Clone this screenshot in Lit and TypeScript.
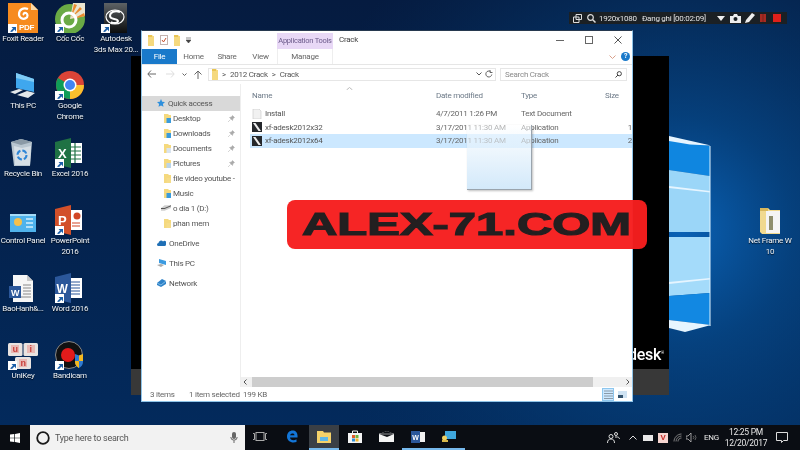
import { LitElement, html, css, svg } from 'lit';
import { customElement } from 'lit/decorators.js';

const shortcut = svg`<g><rect x="0" y="21" width="9" height="9" fill="#fff"/><path d="M2 28.500l3-3-1.500-1.500H8v4.500L6.500 26.500l-2.500 2.500z" fill="#1c5fa8"/></g>`;

const desktopIcons = [
  {
    x: 23, y: 3, lines: ['Foxit Reader'],
    art: svg`<path d="M0 0h23l7 7v23H0z" fill="#f68b1f"/><path d="M23 0v7h7z" fill="#fbd9a8"/>
      <path d="M20 6c-5-2-9 1-9 5 0 4 4 6 7 4 2-1 2-4 0-5-2-.5-3 1-2 2" fill="none" stroke="#fff" stroke-width="2.200"/>
      <text x="11" y="27" font-size="8" font-weight="700" fill="#fff" font-family="Liberation Sans">PDF</text>
      ${shortcut}`,
  },
  {
    x: 70, y: 3, lines: ['Cốc Cốc'],
    art: svg`<circle cx="15" cy="16" r="15" fill="#6aaa45"/><path d="M15 16L18 0h12v13z" fill="#e9e4cf"/>
      <path d="M16 14l3-13 3 1zM17 14l8-10 2 2zM18 16l11-6 1 3z" fill="#ea8a2e"/>
      <circle cx="14" cy="17" r="7" fill="none" stroke="#fff" stroke-width="3"/>
      ${shortcut}`,
  },
  {
    x: 116, y: 3, lines: ['Autodesk', '3ds Max 20...'],
    art: svg`<defs><linearGradient id="ad" x1="0" y1="0" x2="0" y2="1"><stop offset="0" stop-color="#5d6265"/><stop offset="1" stop-color="#0c0d0e"/></linearGradient></defs>
      <rect x="3" y="0" width="23" height="30" fill="url(#ad)"/>
      <path d="M19 9c-5-2-10 0-10 4 0 4 7 2 8 5 0 2-4 3-7 1" fill="none" stroke="#fff" stroke-width="2"/>
      <ellipse cx="14" cy="14" rx="9" ry="7" fill="none" stroke="#fff" stroke-width="1.200"/>
      ${shortcut}`,
  },
  {
    x: 23, y: 70, lines: ['This PC'],
    art: svg`<path d="M8 3l18 6v13L8 18z" fill="#3fa7ee"/><path d="M8 3l18 6v3L8 8z" fill="#7fcbf5"/>
      <path d="M2 22l9-3 4 1-8 4zM9 25l10-4 8 2-7 5z" fill="#e4e8ea"/>`,
  },
  {
    x: 70, y: 70, lines: ['Google', 'Chrome'],
    art: svg`<circle cx="15" cy="15" r="14" fill="#db4437"/>
      <path d="M15 15L3 22A14 14 0 0 1 3 8z" fill="#0f9d58"/><path d="M15 15L3 22A14 14 0 0 0 15 29z" fill="#0f9d58"/>
      <path d="M15 15h14a14 14 0 0 1-14 14z" fill="#fbc02d"/>
      <circle cx="15" cy="15" r="6.500" fill="#fff"/><circle cx="15" cy="15" r="5" fill="#4285f4"/>
      ${shortcut}`,
  },
  {
    x: 23, y: 138, lines: ['Recycle Bin'],
    art: svg`<path d="M3 4l10-3 11 3-2 24H6z" fill="#b9c6d0"/><path d="M3 4l10-3 11 3-11 3z" fill="#8b9aa6"/>
      <path d="M6 8l8 2 9-2-1 19H7z" fill="#d7dfe5"/>
      <circle cx="14" cy="17" r="4.500" fill="none" stroke="#2f86d6" stroke-width="2" stroke-dasharray="5 2"/>`,
  },
  {
    x: 70, y: 138, lines: ['Excel 2016'],
    art: svg`<rect x="14" y="5" width="13" height="20" fill="#fff"/>
      <path d="M15 9h11M15 13h11M15 17h11M15 21h11M20 5v20" stroke="#217346" stroke-width="1.200"/>
      <path d="M0 4l16-4v30L0 26z" fill="#1f7244"/>
      <text x="3" y="20" font-size="13" font-weight="700" fill="#fff" font-family="Liberation Sans">X</text>
      ${shortcut}`,
  },
  {
    x: 23, y: 205, lines: ['Control Panel'],
    art: svg`<rect x="2" y="9" width="26" height="18" fill="#4fb3ec"/><rect x="2" y="9" width="26" height="2" fill="#a6dcf7"/>
      <circle cx="10" cy="17" r="4" fill="#f4c04c"/><path d="M18 14h7M18 18h7M18 22h7" stroke="#d6f0fc" stroke-width="1.500"/>`,
  },
  {
    x: 70, y: 205, lines: ['PowerPoint', '2016'],
    art: svg`<rect x="14" y="5" width="13" height="20" fill="#fff"/>
      <circle cx="22" cy="11" r="3.500" fill="#d24726"/><path d="M17 18h8M17 21h8" stroke="#d24726" stroke-width="1.200"/>
      <path d="M0 4l16-4v30L0 26z" fill="#d2502a"/>
      <text x="3" y="20" font-size="13" font-weight="700" fill="#fff" font-family="Liberation Sans">P</text>
      ${shortcut}`,
  },
  {
    x: 23, y: 273, lines: ['BaoHanh&...'],
    art: svg`<path d="M5 2h14l6 6v21H5z" fill="#f6f6f6"/><path d="M19 2v6h6z" fill="#c8c8c8"/>
      <path d="M15 12h8M15 15h8M15 18h8M15 21h8M8 24h15" stroke="#8a8a8a"/>
      <rect x="1" y="13" width="12" height="12" fill="#2b579a"/>
      <text x="3" y="23" font-size="9" font-weight="700" fill="#fff" font-family="Liberation Sans">W</text>`,
  },
  {
    x: 70, y: 273, lines: ['Word 2016'],
    art: svg`<rect x="14" y="5" width="13" height="20" fill="#fff"/>
      <path d="M16 9h9M16 12h9M16 15h9M16 18h9M16 21h9" stroke="#2b579a" stroke-width="1.200"/>
      <path d="M0 4l16-4v30L0 26z" fill="#2b579a"/>
      <text x="1.500" y="20" font-size="12" font-weight="700" fill="#fff" font-family="Liberation Sans">W</text>
      ${shortcut}`,
  },
  {
    x: 23, y: 340, lines: ['UniKey'],
    art: svg`<rect x="0" y="3" width="14.500" height="13" rx="1.500" fill="#e9e3e0"/><rect x="15.500" y="3" width="14.500" height="13" rx="1.500" fill="#e9e3e0"/><rect x="7" y="17" width="16" height="12" rx="1.500" fill="#e9e3e0"/>
      <rect x="3" y="5" width="8" height="8" fill="#e9b9b4"/><rect x="19" y="5" width="8" height="8" fill="#e9b9b4"/><rect x="11" y="19" width="8" height="8" fill="#e9b9b4"/>
      <text x="4.500" y="12" font-size="9" font-weight="700" fill="#c9413c" font-family="Liberation Sans">u</text>
      <text x="21.500" y="12" font-size="9" font-weight="700" fill="#c9413c" font-family="Liberation Sans">i</text>
      <text x="12.500" y="26" font-size="9" font-weight="700" fill="#c9413c" font-family="Liberation Sans">n</text>
      ${shortcut}`,
  },
  {
    x: 70, y: 340, lines: ['Bandicam'],
    art: svg`<circle cx="14" cy="15" r="13.500" fill="#111" stroke="#888" stroke-width="1"/>
      <circle cx="13" cy="15" r="7" fill="#e21b1b"/>
      <path d="M20 14l4 1.500 4-1.500v8c0 3-2 5-4 6-2-1-4-3-4-6z" fill="#2f7ad1"/><path d="M24 15.500l4-1.500v7h-4zM20 21h4v7c-2-1-4-3-4-6z" fill="#f5b81f"/>
      ${shortcut}`,
  },
  {
    x: 770, y: 205, lines: ['Net Frame W', '10'],
    art: svg`<path d="M5 3h8l2 2h10v24H7L5 27z" fill="#f0d98f"/><path d="M11 6h14v22H11z" fill="#f4f4f4"/>
      <path d="M14 11h4v14h-4z" fill="#8d8d6c"/><path d="M5 3h8v3H5z" fill="#d8b75c"/>`,
  },
];

const navRows = [
  { label: 'Desktop', color: '#3a9bdc', pin: true },
  { label: 'Downloads', color: '#3a9bdc', pin: true },
  { label: 'Documents', color: '#d9e4ef', pin: true },
  { label: 'Pictures', color: '#b9d4ea', pin: true },
  { label: 'file video youtube -', color: '#f5dc8a', pin: false },
  { label: 'Music', color: '#3a9bdc', pin: false },
  { label: 'o dia 1 (D:)', color: '', pin: false },
  { label: 'phan mem', color: '#f5dc8a', pin: false },
];

const fileRows = [
  { name: 'Install', date: '4/7/2011 1:26 PM', type: 'Text Document', size: '', app: false, selected: false },
  { name: 'xf-adesk2012x32', date: '3/17/2011 11:30 AM', type: 'Application', size: '1', app: true, selected: false },
  { name: 'xf-adesk2012x64', date: '3/17/2011 11:30 AM', type: 'Application', size: '2', app: true, selected: true },
];

const folder = svg`<svg width="6" height="11" viewBox="0 0 6 11" style="flex:none"><path d="M0 0h4l1 1h1v10H0z" fill="#f5d97e"/><path d="M0 0h4v2H0z" fill="#e9c453"/></svg>`;

@customElement('app-root')
export class AppRoot extends LitElement {
  static styles = css`
    :host {
      display: block;
      width: 800px;
      height: 450px;
      overflow: hidden;
      font-family: Roboto, 'Noto Sans', sans-serif;
      font-size: 8px;
      letter-spacing: -0.25px;
    }
    .screen {
      display: flex;
      flex-direction: column;
      width: 800px;
      height: 450px;
      filter: blur(0.4px);
    }
    .desktop {
      position: relative;
      flex: 1;
      overflow: hidden;
      background: #04224c;
    }
    .wallpaper {
      position: absolute;
      left: 0;
      top: 0;
    }
    .icon {
      position: absolute;
      width: 60px;
      display: flex;
      flex-direction: column;
      align-items: center;
    }
    .icon svg {
      display: block;
      margin-bottom: 1px;
    }
    .icon-label {
      color: #eef3f8;
      font-size: 8px;
      line-height: 10.500px;
      text-align: center;
      white-space: nowrap;
      text-shadow: 0 1px 1px rgba(0, 0, 0, 0.8);
    }

    .stage {
      position: absolute;
      left: 131px;
      top: 56px;
      width: 538px;
      height: 339px;
      display: flex;
      flex-direction: column;
    }
    .stage-black {
      flex: 1;
      background: #000;
      display: flex;
      align-items: flex-end;
      justify-content: flex-end;
      padding: 0 5px 5px 0;
      color: #fff;
      font-size: 16px;
      font-weight: 500;
      line-height: 18px;
      box-sizing: border-box;
    }
    .stage-black sup {
      font-size: 4px;
      line-height: 4px;
      font-weight: 400;
    }
    .stage-strip {
      height: 26px;
      background: #383838;
    }

    .recorder {
      position: absolute;
      left: 569px;
      top: 12px;
      width: 218px;
      height: 12px;
      background: #1b2024;
      display: flex;
      align-items: center;
      color: #e4e4e4;
      font-size: 8px;
      box-sizing: border-box;
      padding-left: 4px;
    }
    .recorder svg {
      flex: none;
    }
    .rec-size {
      margin-left: 3px;
      width: 43px;
      white-space: nowrap;
    }
    .rec-status {
      width: 70px;
      white-space: nowrap;
    }

    .window {
      position: absolute;
      left: 141px;
      top: 30px;
      width: 492px;
      height: 372px;
      box-sizing: border-box;
      background: #fff;
      border: 1px solid #8fc4e8;
      border-top-color: #27394f;
      display: flex;
      flex-direction: column;
      color: #555;
    }
    .titlebar {
      height: 18px;
      display: flex;
      align-items: flex-end;
      flex: none;
    }
    .qat {
      width: 135px;
      height: 18px;
      display: flex;
      align-items: center;
      padding-left: 6px;
      gap: 6px;
      box-sizing: border-box;
    }
    .app-tools {
      width: 56px;
      height: 16px;
      background: #e8d8f6;
      color: #6b5a8a;
      font-size: 7.500px;
      line-height: 16px;
      text-align: center;
      white-space: nowrap;
    }
    .title {
      margin-left: 6px;
      height: 18px;
      line-height: 18px;
      flex: 1;
      color: #444;
    }
    .win-btn {
      width: 29px;
      height: 18px;
      display: flex;
      align-items: center;
      justify-content: center;
    }
    .tabs {
      height: 15px;
      display: flex;
      align-items: stretch;
      flex: none;
      border-bottom: 1px solid #e6e6e6;
      color: #666;
    }
    .tab {
      display: flex;
      align-items: center;
      justify-content: center;
    }
    .tab-file {
      width: 35px;
      background: #1979ca;
      color: #fff;
    }
    .tab-manage {
      width: 56px;
      border-left: 1px solid #eee;
      border-right: 1px solid #eee;
      box-sizing: border-box;
    }
    .tab-right {
      margin-left: auto;
      display: flex;
      align-items: center;
      gap: 5px;
      padding-right: 2px;
    }
    .help {
      width: 9px;
      height: 9px;
      border-radius: 50%;
      background: #1979ca;
      color: #fff;
      font-size: 7px;
      font-weight: 700;
      line-height: 9px;
      text-align: center;
    }
    .addressbar {
      height: 19px;
      flex: none;
      display: flex;
      align-items: center;
      padding-bottom: 1px;
      box-sizing: border-box;
    }
    .nav-arrows {
      width: 66px;
      display: flex;
      align-items: center;
      padding-left: 5px;
      gap: 7px;
      box-sizing: border-box;
    }
    .address {
      width: 288px;
      height: 13px;
      border: 1px solid #e6e6e6;
      box-sizing: border-box;
      display: flex;
      align-items: center;
      padding-left: 3px;
      gap: 4px;
      color: #555;
      white-space: nowrap;
    }
    .address svg {
      flex: none;
    }
    .address-tools {
      margin-left: auto;
      display: flex;
      align-items: center;
      gap: 3px;
      padding-right: 2px;
    }
    .search {
      width: 127px;
      height: 13px;
      margin-left: 4px;
      border: 1px solid #e6e6e6;
      box-sizing: border-box;
      display: flex;
      align-items: center;
      justify-content: space-between;
      padding: 0 4px;
      color: #8a8a8a;
    }
    .content {
      flex: 1;
      display: flex;
      min-height: 0;
    }
    .nav {
      width: 99px;
      flex: none;
      border-right: 1px solid #eeeeee;
      padding-top: 11.500px;
      box-sizing: border-box;
    }
    .nav-row {
      height: 15px;
      display: flex;
      align-items: center;
      white-space: nowrap;
      color: #555;
      position: relative;
      overflow: hidden;
    }
    .nav-row svg {
      flex: none;
    }
    .nav-row.top {
      padding-left: 15px;
      gap: 3px;
      margin-top: 5px;
    }
    .nav-row.quick {
      background: #d9d9d9;
      margin-top: 0;
    }
    .nav-row.sub {
      padding-left: 22px;
      gap: 2px;
    }
    .nav-row .pin {
      position: absolute;
      right: 5px;
      top: 4px;
    }
    .main {
      flex: 1;
      min-width: 0;
      display: flex;
      flex-direction: column;
      position: relative;
    }
    .list {
      flex: 1;
      padding: 3px 0 0 9px;
      overflow: hidden;
    }
    .list-head {
      height: 20px;
      display: grid;
      grid-template-columns: 184px 85px 84px 1fr;
      color: #6d7a88;
      align-items: end;
      padding-bottom: 5px;
      box-sizing: border-box;
      position: relative;
    }
    .list-head span {
      padding-left: 2px;
      line-height: 12px;
    }
    .caret {
      position: absolute;
      left: 96px;
      top: 0;
    }
    .list-row {
      height: 13.500px;
      display: grid;
      grid-template-columns: 184px 85px 84px 1fr;
      align-items: center;
      color: #666;
      white-space: nowrap;
    }
    .list-row.selected {
      background: #cce8ff;
    }
    .list-name {
      display: flex;
      align-items: center;
      gap: 3px;
      padding-left: 2px;
      color: #555;
    }
    .list-cell {
      padding-left: 2px;
    }
    .list-size {
      text-align: right;
    }
    .ghost {
      position: absolute;
      left: 226px;
      top: 41px;
      width: 64px;
      height: 64px;
      background: linear-gradient(#ffffff80, #d3e9fa);
      border-right: 1px solid #9aa4ad;
      border-bottom: 1px solid #9aa4ad;
      box-shadow: 1px 1px 2px rgba(0, 0, 0, 0.25);
    }
    .hscroll {
      height: 10px;
      flex: none;
      background: #f0f0f0;
      display: flex;
      align-items: center;
      justify-content: space-between;
      padding: 0 2px;
      box-sizing: border-box;
      position: relative;
    }
    .thumb {
      position: absolute;
      left: 11px;
      top: 0;
      bottom: 0;
      width: 341px;
      background: #cdcdcd;
    }
    .status {
      height: 14px;
      flex: none;
      display: flex;
      align-items: center;
      padding-left: 8px;
      color: #666;
      white-space: nowrap;
    }
    .status .items {
      width: 39px;
    }
    .status .sel {
      width: 54px;
    }
    .views {
      margin-left: auto;
      display: flex;
      align-items: center;
      gap: 2px;
      padding-right: 4px;
    }
    .view-btn {
      width: 12px;
      height: 13px;
      display: flex;
      align-items: center;
      justify-content: center;
      box-sizing: border-box;
    }
    .view-btn.on {
      background: #cce8ff;
      border: 1px solid #8ec7ee;
    }

    .banner {
      position: absolute;
      left: 287px;
      top: 200px;
      width: 360px;
      height: 49px;
      border-radius: 8px;
      background: rgba(246, 30, 30, 0.97);
      display: flex;
      align-items: center;
      justify-content: center;
      overflow: hidden;
    }
    .banner-text {
      color: #231f20;
      font-family: 'Liberation Sans', Arial, sans-serif;
      font-size: 32px;
      font-weight: 700;
      letter-spacing: 0;
      line-height: 49px;
      white-space: nowrap;
      transform: scaleX(1.530);
      -webkit-text-stroke: 1.200px #231f20;
    }

    .taskbar {
      height: 25px;
      flex: none;
      display: flex;
      align-items: stretch;
      background: #0a0d13;
      color: #e8e8e8;
    }
    .tb-start {
      width: 30px;
      display: flex;
      align-items: center;
      justify-content: center;
    }
    .tb-search {
      width: 215px;
      background: #f2f2f2;
      display: flex;
      align-items: center;
      padding: 0 7px 0 6px;
      box-sizing: border-box;
      gap: 5px;
      color: #555;
      font-size: 9px;
    }
    .tb-search svg:last-child {
      margin-left: auto;
    }
    .tb-btn {
      display: flex;
      align-items: center;
      justify-content: center;
      box-sizing: border-box;
      border-bottom: 2px solid transparent;
    }
    .tb-btn.open {
      border-bottom-color: #76b9ed;
    }
    .tb-btn.active {
      background: #3a3f45;
      border-bottom-color: #76b9ed;
    }
    .tray {
      margin-left: auto;
      display: flex;
      align-items: center;
      padding-right: 3px;
    }
    .tray-item {
      display: flex;
      align-items: center;
      justify-content: center;
    }
    .eng {
      width: 27px;
      font-size: 8px;
      text-align: center;
    }
    .clock {
      width: 42px;
      font-size: 8.500px;
      line-height: 11px;
      text-align: center;
      white-space: nowrap;
    }
    .v-badge {
      width: 10px;
      height: 10px;
      background: #f6d5d0;
      color: #c9302c;
      font-size: 8px;
      font-weight: 700;
      line-height: 10px;
      text-align: center;
    }
  `;

  private renderWallpaper() {
    return html`<svg class="wallpaper" width="800" height="425" viewBox="0 0 800 425">
      <defs>
        <linearGradient id="bg" x1="0" y1="0" x2="0" y2="1">
          <stop offset="0" stop-color="#051b40"/><stop offset="0.5" stop-color="#04224d"/><stop offset="1" stop-color="#032a5c"/>
        </linearGradient>
        <radialGradient id="glow" gradientUnits="userSpaceOnUse" cx="680" cy="230" r="380">
          <stop offset="0" stop-color="#0a62b6"/><stop offset="0.3" stop-color="#064a8c" stop-opacity="0.75"/><stop offset="1" stop-color="#04305f" stop-opacity="0"/>
        </radialGradient>
      </defs>
      <rect width="800" height="425" fill="url(#bg)"/>
      <rect width="800" height="425" fill="url(#glow)"/>
      <path d="M669 137L710 146V176L669 170Z" fill="#0f86e0"/>
      <path d="M669 170L710 176V232H669Z" fill="#9bd6f8"/>
      <path d="M669 237H710V293L669 296Z" fill="#a4dbfa"/>
      <path d="M669 296L710 293V325L669 320Z" fill="#1288e2"/>
      <path d="M669 136L711 145.500L690 144.500L669 141ZM669 186L710 191V192.500L669 188ZM669 282L710 278V279.500L669 284ZM669 320L711 325L685 332L669 328Z" fill="#e6f5ff"/>
      <path d="M710 146V326" stroke="#dff3ff" stroke-width="1"/>
    </svg>`;
  }

  private renderRecorder() {
    return html`<div class="recorder">
      <svg width="9" height="9" viewBox="0 0 9 9"><path d="M3 .5h5.500v5H3zM.5 3h5.500v5.500H.5z" fill="#1b2024" stroke="#ddd"/></svg>
      <svg style="margin-left:5px" width="9" height="9" viewBox="0 0 9 9"><circle cx="3.500" cy="3.500" r="2.800" fill="none" stroke="#ddd" stroke-width="1.200"/><path d="M5.500 5.500L8.500 8.500" stroke="#ddd" stroke-width="1.500"/></svg>
      <span class="rec-size">1920x1080</span>
      <span class="rec-status">Đang ghi [00:02:09]</span>
      <svg style="margin-left:5px" width="8" height="5" viewBox="0 0 8 5"><path d="M0 0h8L4 5z" fill="#eee"/></svg>
      <svg style="margin-left:5px" width="11" height="9" viewBox="0 0 11 9"><path d="M0 2h3l1-2h3l1 2h3v7H0z" fill="#eee"/><circle cx="5.500" cy="5" r="2" fill="#1b2024"/></svg>
      <svg style="margin-left:4px" width="10" height="10" viewBox="0 0 10 10"><path d="M0 10l1-3 6-7 3 2-6 7z" fill="#eee"/></svg>
      <svg style="margin-left:5px" width="6" height="8" viewBox="0 0 6 8"><rect width="6" height="8" fill="#a82a22"/><rect x="2.700" width=".6" height="8" fill="#5c1e1a"/></svg>
      <svg style="margin-left:7px" width="8" height="8" viewBox="0 0 8 8"><rect width="8" height="8" fill="#e0201a"/></svg>
    </div>`;
  }

  private renderTitlebar() {
    return html`<div class="titlebar">
      <div class="qat">
        ${folder}
        <svg width="8" height="10" viewBox="0 0 8 10"><rect x=".5" y=".5" width="7" height="9" fill="#fff" stroke="#c4b4b0"/><path d="M2 5l1.500 2 2.500-4" fill="none" stroke="#c9502c"/></svg>
        ${folder}
        <svg width="5" height="6" viewBox="0 0 5 6"><path d="M0 1h5M0 3h5L2.500 6z" stroke="#444" stroke-width=".6" fill="#444"/></svg>
      </div>
      <div class="app-tools">Application Tools</div>
      <div class="title">Crack</div>
      <div class="win-btn"><svg width="8" height="8" viewBox="0 0 8 8"><path d="M0 4.500h8" stroke="#666"/></svg></div>
      <div class="win-btn"><svg width="8" height="8" viewBox="0 0 8 8"><rect x=".5" y=".5" width="7" height="7" fill="none" stroke="#666"/></svg></div>
      <div class="win-btn"><svg width="8" height="8" viewBox="0 0 8 8"><path d="M.5 .5l7 7M7.500 .5l-7 7" stroke="#555"/></svg></div>
    </div>`;
  }

  private renderTabs() {
    return html`<div class="tabs">
      <div class="tab tab-file">File</div>
      <div class="tab" style="width:33px">Home</div>
      <div class="tab" style="width:34px">Share</div>
      <div class="tab" style="width:33px">View</div>
      <div class="tab tab-manage">Manage</div>
      <div class="tab-right">
        <svg width="7" height="4" viewBox="0 0 7 4"><path d="M.5 .5l3 3 3-3" fill="none" stroke="#d9a08a"/></svg>
        <div class="help">?</div>
      </div>
    </div>`;
  }

  private renderAddress() {
    return html`<div class="addressbar">
      <div class="nav-arrows">
        <svg width="9" height="8" viewBox="0 0 9 8"><path d="M9 4H1M4 .5L.8 4 4 7.500" fill="none" stroke="#666" stroke-width="1"/></svg>
        <svg style="margin-left:3px" width="9" height="8" viewBox="0 0 9 8"><path d="M0 4h8M5 .5L8.200 4 5 7.500" fill="none" stroke="#ddd" stroke-width="1"/></svg>
        <svg width="5" height="3" viewBox="0 0 5 3"><path d="M.5 .5l2 2 2-2" fill="none" stroke="#666"/></svg>
        <svg width="8" height="9" viewBox="0 0 8 9"><path d="M4 9V1M.5 4.500L4 1l3.500 3.500" fill="none" stroke="#666" stroke-width="1"/></svg>
      </div>
      <div class="address">
        ${folder}
        <span>&gt;</span><span>2012 Crack</span><span>&gt;</span><span>Crack</span>
        <div class="address-tools">
          <svg width="6" height="4" viewBox="0 0 6 4"><path d="M.5 .5L3 3 5.500 .5" fill="none" stroke="#555"/></svg>
          <svg width="8" height="8" viewBox="0 0 8 8"><path d="M6.800 4.500A3 3 0 1 1 5.500 1.500M5 0v2.500h2.500" fill="none" stroke="#666"/></svg>
        </div>
      </div>
      <div class="search">
        <span>Search Crack</span>
        <svg width="7" height="7" viewBox="0 0 7 7"><circle cx="4.300" cy="2.700" r="2.100" fill="none" stroke="#444"/><path d="M3 4L.5 6.500" stroke="#444"/></svg>
      </div>
    </div>`;
  }

  private renderNav() {
    return html`<div class="nav">
      <div class="nav-row top quick">
        <svg width="8" height="8" viewBox="0 0 8 8"><path d="M4 0l1.200 2.700 2.800.3-2.100 1.900.6 2.900L4 6.400 1.500 7.800l.6-2.900L0 3l2.800-.3z" fill="#2e8fdc"/></svg>
        <span>Quick access</span>
      </div>
      ${navRows.map((row) => html`<div class="nav-row sub">
        ${row.color
          ? html`<svg width="7" height="9" viewBox="0 0 7 9"><path d="M0 0h4l1 1h2v8H0z" fill="#f5d97e"/><rect x="2.500" y="4" width="4.500" height="5" fill="${row.color}"/></svg>`
          : html`<svg style="margin-left:-3px" width="10" height="6" viewBox="0 0 11 6"><path d="M0 3l4-3h7v3l-7 3H0z" fill="#d0d0d0"/><path d="M0 3h4l7-3v1L4 4H0z" fill="#555"/></svg>`}
        <span>${row.label}</span>
        ${row.pin ? html`<svg class="pin" width="7" height="7" viewBox="0 0 7 7"><path d="M0 7l2.500-2.500M1.500 2.500l3 3 .5-2 1.500-1L4.500 .5l-1 1.500z" fill="#aaa" stroke="#aaa" stroke-width=".5"/></svg>` : ''}
      </div>`)}
      <div class="nav-row top">
        <svg width="9" height="6" viewBox="0 0 9 6"><path d="M1.500 6a1.500 1.500 0 0 1 0-3 2.500 2.500 0 0 1 4.500-1.500A2 2 0 0 1 9 4.500 1.500 1.500 0 0 1 7.500 6z" fill="#1f6fb5"/></svg>
        <span>OneDrive</span>
      </div>
      <div class="nav-row top">
        <svg width="9" height="8" viewBox="0 0 9 8"><path d="M2 0l7 2v4L2 4z" fill="#3b9ae0"/><path d="M0 6l4-1 3 1-3 2z" fill="#aaa"/></svg>
        <span>This PC</span>
      </div>
      <div class="nav-row top">
        <svg width="9" height="8" viewBox="0 0 9 8"><path d="M0 4l5-4 4 2v3L4 8 0 6z" fill="#2e82c8"/><path d="M0 4l4 2 5-4" fill="none" stroke="#a6d4f2" stroke-width=".7"/></svg>
        <span>Network</span>
      </div>
    </div>`;
  }

  private renderList() {
    return html`<div class="main">
      <div class="list">
        <div class="list-head">
          <svg class="caret" width="7" height="3" viewBox="0 0 7 3"><path d="M.5 3l3-2.500 3 2.500" fill="none" stroke="#bbb"/></svg>
          <span>Name</span><span>Date modified</span><span>Type</span><span>Size</span>
        </div>
        ${fileRows.map((row) => html`<div class="list-row ${row.selected ? 'selected' : ''}">
          <div class="list-name">
            ${row.app
              ? html`<svg width="10" height="10" viewBox="0 0 10 10"><rect width="10" height="10" fill="#25282c"/><path d="M1 1h2.500L9 9H6.500z" fill="#eee"/></svg>`
              : html`<svg width="10" height="10" viewBox="0 0 10 10"><path d="M1 0h6l2 2v8H1z" fill="#f1f1f1" stroke="#c8c8c8" stroke-width=".6"/></svg>`}
            <span>${row.name}</span>
          </div>
          <div class="list-cell">${row.date}</div>
          <div class="list-cell">${row.type}</div>
          <div class="list-cell list-size">${row.size}</div>
        </div>`)}
      </div>
      <div class="ghost"></div>
      <div class="hscroll">
        <svg width="4" height="6" viewBox="0 0 4 6"><path d="M3.500 .5L1 3l2.500 2.500" fill="none" stroke="#555"/></svg>
        <div class="thumb"></div>
        <svg width="4" height="6" viewBox="0 0 4 6"><path d="M.5 .5L3 3 .5 5.500" fill="none" stroke="#555"/></svg>
      </div>
    </div>`;
  }

  private renderTaskbar() {
    return html`<div class="taskbar">
      <div class="tb-start">
        <svg width="10" height="10" viewBox="0 0 10 10"><path d="M0 1.500L4.300 1v3.700H0zM5 .9L10 0v4.700H5zM0 5.300h4.300V9L0 8.500zM5 5.300h5V10L5 9.100z" fill="#fff"/></svg>
      </div>
      <div class="tb-search">
        <svg width="14" height="14" viewBox="0 0 14 14"><circle cx="7" cy="7" r="5.800" fill="none" stroke="#1a1a1a" stroke-width="1.800"/></svg>
        <span>Type here to search</span>
        <svg width="8" height="11" viewBox="0 0 8 11"><rect x="2" y="0" width="4" height="7" rx="2" fill="#666"/><path d="M.8 5a3.200 3.200 0 0 0 6.400 0M4 8.500V11" fill="none" stroke="#666"/></svg>
      </div>
      <div class="tb-btn" style="width:30px"><svg width="14" height="9" viewBox="0 0 14 9"><rect x="3" y=".5" width="8" height="8" fill="none" stroke="#aaa"/><path d="M0 1.500h1.500v6H0M14 1.500h-1.500v6H14" fill="none" stroke="#aaa"/></svg></div>
      <div class="tb-btn" style="width:34px"><svg width="12" height="13" viewBox="0 0 12 13"><path d="M1 6.500C1 2.500 4 .5 6.500 .5 10 .5 12 3 11.500 7.500H4c0 2.500 3.500 3.500 6.500 1.800v2.700C6 13.500 1 11.500 1 6.500zM4 5.200h4.500C8.500 3 5 2.800 4 5.200z" fill="#1376d8"/></svg></div>
      <div class="tb-btn active" style="width:30px"><svg width="14" height="12" viewBox="0 0 14 12"><path d="M0 0h6l1 1.500h7V12H0z" fill="#f4d26a"/><rect x="3" y="6" width="8" height="4" fill="#5db7e8"/></svg></div>
      <div class="tb-btn" style="width:31px"><svg width="14" height="13" viewBox="0 0 14 13"><path d="M0 3h14v10H0z" fill="#f4f4f4"/><path d="M4.500 3V1h5v2" fill="none" stroke="#f4f4f4"/><rect x="4" y="5" width="3" height="3" fill="#e25b2b"/><rect x="7.500" y="5" width="3" height="3" fill="#6fb33f"/><rect x="4" y="8.500" width="3" height="3" fill="#2f8fd8"/><rect x="7.500" y="8.500" width="3" height="3" fill="#f4b52b"/></svg></div>
      <div class="tb-btn" style="width:32px"><svg width="15" height="11" viewBox="0 0 15 11"><path d="M0 3L8 0l7 3v8H0z" fill="#f4f4f4"/><path d="M0 3l8 3 7-3-7-3z" fill="#0a0d13"/><path d="M0 3h15" stroke="#f4f4f4" stroke-width=".6"/></svg></div>
      <div class="tb-btn open" style="width:31px"><svg width="14" height="12" viewBox="0 0 14 12"><rect x="7" y="1" width="7" height="10" fill="#f0f0f0"/><rect width="9" height="12" fill="#2b579a"/><text x="1.200" y="9" font-size="7" font-weight="700" fill="#fff" font-family="Liberation Sans">W</text></svg></div>
      <div class="tb-btn open" style="width:32px"><svg width="14" height="11" viewBox="0 0 14 11"><rect x="3" y="0" width="11" height="8" fill="#3fa7dd"/><circle cx="2.500" cy="7" r="2.500" fill="#f0d060"/><rect x="0" y="9" width="6" height="2" fill="#d9b84a"/></svg></div>
      <div class="tray">
        <div class="tray-item" style="width:25px"><svg width="13" height="11" viewBox="0 0 13 11"><circle cx="4" cy="4.500" r="2" fill="none" stroke="#ddd"/><path d="M.5 11c0-3 1.500-4 3.500-4s3.500 1 3.500 4" fill="none" stroke="#ddd"/><circle cx="9" cy="2" r="1.500" fill="none" stroke="#ddd"/><path d="M8 5h2.500c1 0 1.800.8 2 2" fill="none" stroke="#ddd"/></svg></div>
        <div class="tray-item" style="width:14px"><svg width="8" height="5" viewBox="0 0 8 5"><path d="M.5 4.500L4 1l3.500 3.500" fill="none" stroke="#ddd"/></svg></div>
        <div class="tray-item" style="width:16px"><svg width="10" height="6" viewBox="0 0 10 6"><rect width="10" height="6" fill="#e8e8e8"/></svg></div>
        <div class="tray-item" style="width:14px"><div class="v-badge">V</div></div>
        <div class="tray-item" style="width:15px"><svg width="9" height="9" viewBox="0 0 9 9"><path d="M1 8.500C1 4.500 4.500 1 8.500 1M3 8.500C3 5.500 5.500 3 8.500 3M5 8.500C5 6.500 6.500 5 8.500 5" fill="none" stroke="#999" stroke-width=".8"/></svg></div>
        <div class="tray-item" style="width:13px"><svg width="11" height="9" viewBox="0 0 11 9"><path d="M0 3h2l3-3v9L2 6H0z" fill="none" stroke="#bbb" stroke-width=".8"/><path d="M7 3l1 1.500L7 6M9 2l1 2.500L9 7" fill="none" stroke="#777" stroke-width=".8"/></svg></div>
        <div class="tray-item eng">ENG</div>
        <div class="tray-item clock">12:25 PM<br />12/20/2017</div>
        <div class="tray-item" style="width:30px"><svg width="12" height="11" viewBox="0 0 12 11"><path d="M.5 .5h11v8H7.500L5.500 10.500V8.500H.5z" fill="none" stroke="#ddd"/></svg></div>
      </div>
    </div>`;
  }

  render() {
    return html`<div class="screen">
      <div class="desktop">
        ${this.renderWallpaper()}
        <div class="stage">
          <div class="stage-black"><span>Autodesk<sup>®</sup></span></div>
          <div class="stage-strip"></div>
        </div>
        ${desktopIcons.map((item) => html`<div class="icon" style="left:${item.x - 30}px;top:${item.y}px">
          <svg width="30" height="30" viewBox="0 0 30 30">${item.art}</svg>
          ${item.lines.map((line) => html`<div class="icon-label">${line}</div>`)}
        </div>`)}
        ${this.renderRecorder()}
        <div class="window">
          ${this.renderTitlebar()}
          ${this.renderTabs()}
          ${this.renderAddress()}
          <div class="content">
            ${this.renderNav()}
            ${this.renderList()}
          </div>
          <div class="status">
            <span class="items">3 items</span><span class="sel">1 item selected</span><span>199 KB</span>
            <div class="views">
              <div class="view-btn on"><svg width="9" height="9" viewBox="0 0 9 9"><path d="M0 1h9M0 3.500h9M0 6h9M0 8.500h9" stroke="#8a9aa8"/></svg></div>
              <div class="view-btn"><svg width="9" height="7" viewBox="0 0 9 7"><rect width="9" height="7" fill="#cfe3f3"/><rect y="4" width="5" height="3" fill="#33536e"/></svg></div>
            </div>
          </div>
        </div>
        <div class="banner"><span class="banner-text">ALEX-71.COM</span></div>
      </div>
      ${this.renderTaskbar()}
    </div>`;
  }
}
